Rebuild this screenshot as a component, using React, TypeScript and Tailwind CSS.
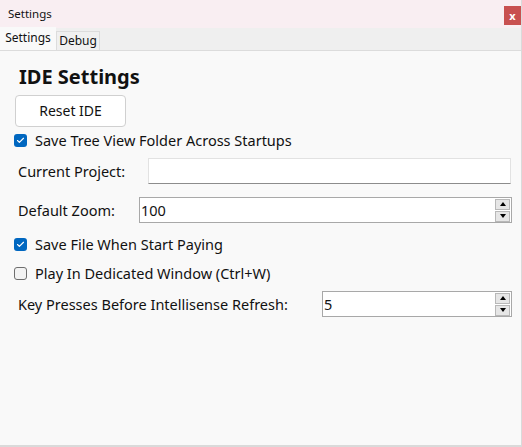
import { Check } from "lucide-react";

function Checkbox({ checked, label }: { checked: boolean; label: string }) {
  return (
    <label className="flex h-[18px] items-center gap-[8px] pl-[14px]">
      {checked ? (
        <span className="flex h-[13px] w-[13px] items-center justify-center rounded-[3px] bg-[#0067c0]">
          <Check className="h-[9px] w-[9px] text-white" strokeWidth={3} />
        </span>
      ) : (
        <span className="h-[13px] w-[13px] rounded-[3px] border border-[#6e6e6e] bg-[#f3f3f3]" />
      )}
      <span>{label}</span>
    </label>
  );
}

function Spinner() {
  return (
    <div className="flex w-[15px] flex-col gap-[1px]">
      <div className="flex h-[11px] items-center justify-center border border-[#b8b8b8] bg-[#e6e6e6]">
        <span className="border-x-[3px] border-b-[4px] border-x-transparent border-b-black" />
      </div>
      <div className="flex h-[11px] items-center justify-center border border-[#b8b8b8] bg-[#e6e6e6]">
        <span className="border-x-[3px] border-t-[4px] border-x-transparent border-t-black" />
      </div>
    </div>
  );
}

function NumberBox({ value, className }: { value: string; className: string }) {
  return (
    <div className={`flex h-[26px] items-center justify-between border border-[#a8a8a8] bg-white pl-[1px] pr-[1px] ${className}`}>
      <span>{value}</span>
      <Spinner />
    </div>
  );
}

export default function App() {
  return (
    <div
      className="flex h-[447px] w-[522px] flex-col border-b-2 border-r border-[#dadada] bg-[#f9f9f9] text-[14.5px] leading-[18px] text-[#111]"
      style={{ fontFamily: '"Noto Sans", sans-serif' }}
    >
      <div className="flex h-[28px] items-start justify-between bg-[#f9eef2]">
        <span className="pl-[8px] pt-[6px] text-[11.5px] leading-[16px]">Settings</span>
        <span className="mt-[6px] flex h-[19px] w-[17px] items-center justify-center bg-[#c85050] text-[11px] font-bold leading-none text-white">
          x
        </span>
      </div>

      <div className="flex h-[23px] items-end border-b border-[#dcdcdc] bg-[#efefef] text-[12px]">
        <div className="flex h-[23px] w-[56px] items-center justify-center bg-[#f9f9f9] pb-[2px]">Settings</div>
        <div className="flex h-[19px] w-[44px] items-center justify-center border-x border-t border-[#dcdcdc] bg-[#f0f0f0]">
          Debug
        </div>
      </div>

      <div className="flex flex-col">
        <h1 className="pl-[19px] pt-[13px] text-[20px] font-bold leading-[26px]">IDE Settings</h1>
        <button className="ml-[15px] mt-[5px] h-[32px] w-[111px] rounded-[4px] border border-[#d0d0d0] bg-white text-[14px]">
          Reset IDE
        </button>
        <div className="mt-[4px]">
          <Checkbox checked label="Save Tree View Folder Across Startups" />
        </div>
        <div className="mt-[9px] flex items-center">
          <span className="w-[148px] pl-[18px]">Current Project:</span>
          <div className="h-[26px] w-[363px] border border-[#e2e2e2] border-b-[#8c8c8c] bg-white" />
        </div>
        <div className="mt-[13px] flex items-center">
          <span className="w-[139px] pl-[18px]">Default Zoom:</span>
          <NumberBox value="100" className="w-[373px]" />
        </div>
        <div className="mt-[12px]">
          <Checkbox checked label="Save File When Start Paying" />
        </div>
        <div className="mt-[11px]">
          <Checkbox checked={false} label="Play In Dedicated Window (Ctrl+W)" />
        </div>
        <div className="mt-[9px] flex items-center">
          <span className="w-[322px] pl-[18px]">Key Presses Before Intellisense Refresh:</span>
          <NumberBox value="5" className="w-[190px]" />
        </div>
      </div>
    </div>
  );
}
